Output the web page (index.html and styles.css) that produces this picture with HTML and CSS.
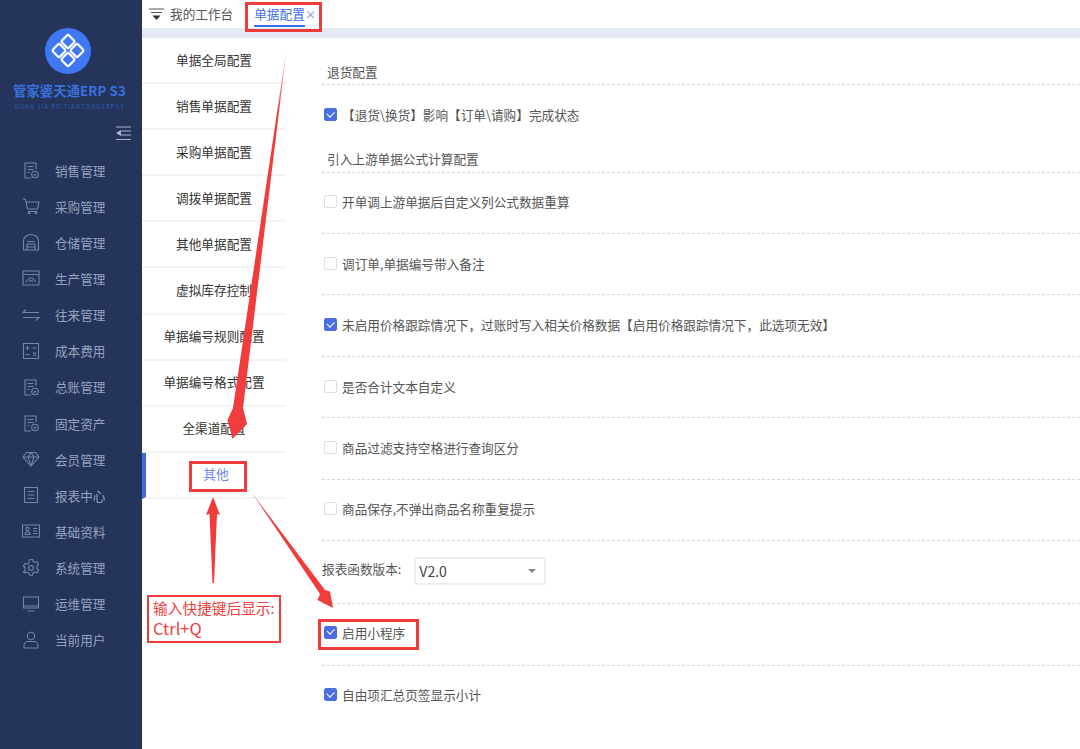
FILE: index.html
```html
<!DOCTYPE html>
<html lang="zh-CN">
<head>
<meta charset="utf-8">
<title>单据配置</title>
<link rel="stylesheet" href="styles.css">
</head>
<body>
<div class="app">
  <aside class="sidebar">
    <div class="brand">
      <div class="logo">
        <svg viewBox="0 0 46 46" width="46" height="46"><g fill="none" stroke="#fff" stroke-width="2.2" stroke-linejoin="round"><rect x="18" y="8.5" width="10" height="10" rx="1.5" transform="rotate(45 23 13.5)"/><rect x="9" y="17.5" width="10" height="10" rx="1.5" transform="rotate(45 14 22.5)"/><rect x="27" y="17.5" width="10" height="10" rx="1.5" transform="rotate(45 32 22.5)"/><rect x="18" y="26.5" width="10" height="10" rx="1.5" transform="rotate(45 23 31.5)"/></g></svg>
      </div>
      <div class="brand-name">管家婆天通ERP S3</div>
      <div class="brand-sub">GUAN JIA PO TIANTONGERPS3</div>
    </div>
    <div class="collapse">
      <svg viewBox="0 0 16 15" width="16" height="15"><g stroke="#aab4cc" stroke-width="1.2"><path d="M1 1h15M6 5h10M6 9h10M1 13.500h15"/></g><path d="M1 7l5-3v6z" fill="#aab4cc"/></svg>
    </div>
    <nav class="nav">
      <a class="nav-item"><svg class="ic" viewBox="0 0 18 18"><path d="M14 8V2H3v15h6M5.500 5.500h6M5.500 8.500h6M5.500 11.500h2"/><circle cx="13" cy="13.500" r="3.300"/><path d="M11.700 13.500l1 1 1.600-1.700"/></svg><span>销售管理</span></a>
      <a class="nav-item"><svg class="ic" viewBox="0 0 18 18"><path d="M1 1.500l2.500 1 2 9.500h10L17 5H4M6 14.500h9"/><circle cx="7" cy="16" r=".8"/><circle cx="14" cy="16" r=".8"/></svg><span>采购管理</span></a>
      <a class="nav-item"><svg class="ic" viewBox="0 0 18 18"><path d="M1.500 8C1.500 4 5 1.500 9 1.500S16.500 4 16.500 8v9h-15zM5 8.500h8M5 11h8v6M5 17v-6M5 14h8"/></svg><span>仓储管理</span></a>
      <a class="nav-item"><svg class="ic" viewBox="0 0 18 18"><path d="M1 2h16v14H1zM1 5.500h16M4 13l3.500-4h3l3.500 4M7.500 13a1.500 1.500 0 0 1 3 0"/></svg><span>生产管理</span></a>
      <a class="nav-item"><svg class="ic" viewBox="0 0 18 18"><path d="M4 3.500L1 6.500h16M14 14.500l3-3H1"/></svg><span>往来管理</span></a>
      <a class="nav-item"><svg class="ic" viewBox="0 0 18 18"><path d="M1.500 1.500h15v15h-15zM3.500 6h4M5.500 4v4M10.500 6h4M3.500 12.500h4M11 10.500l3 3.500M14 10.500L11 14"/></svg><span>成本费用</span></a>
      <a class="nav-item"><svg class="ic" viewBox="0 0 18 18"><path d="M14 8V2H3v15h6M5.500 5.500h6M5.500 8.500h6M5.500 11.500h2"/><circle cx="13" cy="13.500" r="3.300"/><path d="M11.700 13.500l1 1 1.600-1.700"/></svg><span>总账管理</span></a>
      <a class="nav-item"><svg class="ic" viewBox="0 0 18 18"><path d="M14 8V2H3v15h6M5.500 5.500h6M5.500 8.500h6M5.500 11.500h2"/><circle cx="13" cy="13.500" r="3.300"/><path d="M11.700 13.500l1 1 1.600-1.700"/></svg><span>固定资产</span></a>
      <a class="nav-item"><svg class="ic" viewBox="0 0 18 18"><path d="M4.500 2.500h9L17 7l-8 9-8-9zM1 7h16M6 7l3 9 3-9M6 7l3-4.500L12 7"/></svg><span>会员管理</span></a>
      <a class="nav-item"><svg class="ic" viewBox="0 0 18 18"><path d="M2.500 1.500h13v15h-13zM5.500 5.500h7M5.500 9h7M5.500 12.500h7"/></svg><span>报表中心</span></a>
      <a class="nav-item"><svg class="ic" viewBox="0 0 18 18"><path d="M.5 3h17v12H.5zM11 6.500h4.500M11 9h4.500M11 11.500h4.500M3 12.500c0-2 1-2.800 2.500-2.800S8 10.500 8 12.500z"/><circle cx="5.500" cy="7" r="1.600"/></svg><span>基础资料</span></a>
      <a class="nav-item"><svg class="ic" viewBox="0 0 18 18"><path d="M7.500 1h3l.6 2.200 1.800.9 2.200-.7 1.500 2.600-1.600 1.600v2.800l1.600 1.600-1.500 2.600-2.200-.7-1.800.9-.6 2.200h-3l-.6-2.200-1.800-.9-2.200.7L1.400 13.800 3 12.200V9.400L1.400 7.800l1.500-2.600 2.200.7 1.800-.9z" transform="translate(0 -.8)"/><circle cx="9" cy="9" r="2.400"/></svg><span>系统管理</span></a>
      <a class="nav-item"><svg class="ic" viewBox="0 0 18 18"><path d="M1.500 2h15v11h-15zM1.500 11h15M5.500 16h7"/></svg><span>运维管理</span></a>
      <a class="nav-item"><svg class="ic" viewBox="0 0 18 18"><circle cx="9" cy="5" r="3.700"/><path d="M2 17v-2.500c0-2.500 2-4 4-4h6c2 0 4 1.500 4 4V17z"/></svg><span>当前用户</span></a>
    </nav>
  </aside>
  <main class="main">
    <header class="tabs">
      <svg class="tabs-menu" viewBox="0 0 15 13" width="15" height="13"><path d="M0 1h15M2 4.500h11" stroke="#555" stroke-width="1.200"/><path d="M3.500 7.500h8L7.500 12z" fill="#333"/></svg>
      <span class="tab">我的工作台</span>
      <span class="tab tab-active"><span class="tab-label">单据配置</span><span class="tab-close">×</span></span>
    </header>
    <div class="strip"></div>
    <div class="body">
      <ul class="menu">
        <li>单据全局配置</li>
        <li>销售单据配置</li>
        <li>采购单据配置</li>
        <li>调拨单据配置</li>
        <li>其他单据配置</li>
        <li>虚拟库存控制</li>
        <li>单据编号规则配置</li>
        <li>单据编号格式配置</li>
        <li>全渠道配置</li>
        <li class="menu-active">其他</li>
      </ul>
      <section class="panel">
        <h3 class="sec first">退货配置</h3>
        <label class="row plain"><i class="cb on"></i>【退货\换货】影响【订单\请购】完成状态</label>
        <h3 class="sec second">引入上游单据公式计算配置</h3>
        <label class="row"><i class="cb"></i>开单调上游单据后自定义列公式数据重算</label>
        <label class="row"><i class="cb"></i>调订单,单据编号带入备注</label>
        <label class="row"><i class="cb on"></i>未启用价格跟踪情况下，过账时写入相关价格数据【启用价格跟踪情况下，此选项无效】</label>
        <label class="row"><i class="cb"></i>是否合计文本自定义</label>
        <label class="row"><i class="cb"></i>商品过滤支持空格进行查询区分</label>
        <label class="row"><i class="cb"></i>商品保存,不弹出商品名称重复提示</label>
        <div class="row row-select"><span class="sel-label">报表函数版本:</span><span class="select"><span>V2.0</span><i class="caret"></i></span></div>
        <label class="row row-mini"><i class="cb on"></i>启用小程序</label>
        <label class="row plain last"><i class="cb on"></i>自由项汇总页签显示小计</label>
      </section>
    </div>
  </main>
</div>

<div class="mark mark-tab"></div>
<div class="mark mark-other"></div>
<div class="mark mark-mini"></div>
<div class="mark mark-hint">输入快捷键后显示:<br><span class="hint-key">Ctrl+Q</span></div>
<svg class="arrows" viewBox="0 0 1080 749" width="1080" height="749">
  <defs>
    <linearGradient id="fade" gradientUnits="userSpaceOnUse" x1="0" y1="42" x2="0" y2="110">
      <stop offset="0" stop-color="#f23c3c" stop-opacity="0"/>
      <stop offset="1" stop-color="#f23c3c"/>
    </linearGradient>
  </defs>
  <polygon class="arrow-fade" points="287.500,42 243,408 247,424 232.500,439 227.500,420 233,408"/>
  <polygon points="213,497 220,515 217,514 214,583 212.500,583 209.500,514 206,515"/>
  <polygon points="252,493 325,590 330,591.500 333,608 317.500,600 320,594"/>
</svg>
</body>
</html>
```
FILE: styles.css
```css
* { box-sizing: border-box; }
html, body { margin: 0; padding: 0; width: 1080px; height: 749px; overflow: hidden; background: #fff; }
body { font-family: "Noto Sans CJK SC", "Noto Sans", sans-serif; font-size: 12.650px; color: #444; position: relative; }
.app { display: flex; width: 1080px; height: 749px; }

.sidebar { width: 142px; flex: none; background: #24345a; color: #96a3bf; display: flex; flex-direction: column; }
.brand { display: flex; flex-direction: column; align-items: center; padding: 28px 3px 0 0; }
.logo { width: 46px; height: 46px; border-radius: 50%; background: #3f78f2; margin-right: 3px; }
.brand-name { margin-top: 6px; font-size: 13.300px; font-weight: 700; line-height: 22px; color: #3a70dc; white-space: nowrap; letter-spacing: .1px; }
.brand-sub { font-size: 6px; line-height: 9px; color: #2f5cb4; letter-spacing: 1px; white-space: nowrap; }
.collapse { display: flex; justify-content: flex-end; padding: 15px 11px 0 0; height: 41px; }
.nav { display: flex; flex-direction: column; }
.nav-item { display: flex; align-items: center; height: 36.150px; padding-left: 22px; gap: 15px; font-size: 12.600px; white-space: nowrap; }
.ic { width: 18px; height: 18px; flex: none; fill: none; stroke: #7585a8; stroke-width: 1.100; }

.main { flex: 1; min-width: 0; display: flex; flex-direction: column; }
.tabs { height: 28px; display: flex; align-items: center; padding-left: 7px; color: #555; background: #fff; }
.tabs-menu { flex: none; }
.tab { line-height: 28px; margin-left: 6px; position: relative; white-space: nowrap; }
.tab-active { margin-left: 21px; color: #3f6fe8; display: flex; align-items: center; }
.tab-label { display: block; height: 28px; position: relative; }
.tab-label::after { content: ""; position: absolute; left: 0; right: 0; bottom: 1px; height: 2.500px; background: #3f6fe8; }
.tab-close { font-size: 11.500px; font-weight: 700; color: #9aaddc; }
.strip { height: 10px; background: #e5eaf2; }

.body { flex: 1; display: flex; min-height: 0; }
.menu { list-style: none; margin: 0; padding: 0; width: 144px; flex: none; color: #333; }
.menu li { height: 46.100px; display: flex; align-items: center; justify-content: center; padding-bottom: 2px; border-bottom: 2px solid #f3f3f3; white-space: nowrap; }
.menu .menu-active { color: #6a88ee; border-left: 4px solid #4468e0; }

.panel { flex: 1; min-width: 0; padding-left: 36px; }
.sec { margin: 0; font-weight: 400; font-size: 12.650px; color: #555; height: 26px; line-height: 26px; padding-left: 5px; border-bottom: 1px dashed #d9d9d9; }
.sec.first { margin-top: 21px; }
.sec.second { height: 26.700px; }
.row { display: flex; align-items: center; height: 61.400px; padding: 0 0 2px 2px; border-bottom: 1px dashed #d9d9d9; color: #555; white-space: nowrap; }
.row.plain { height: 61px; border-bottom: 0; }
.row.last { padding-bottom: 4px; }
.row-select { height: 63px; padding-left: 0; }
.row-mini { height: 62px; padding-bottom: 5px; }
.cb { width: 13px; height: 13px; flex: none; border: 1.500px solid #dedede; border-radius: 2px; background: #fff; margin-right: 5px; position: relative; }
.cb.on { background: #4a6ee0; border-color: #4a6ee0; }
.cb.on::after { content: ""; position: absolute; left: 2px; top: 1.500px; width: 6px; height: 3.500px; border-left: 1.600px solid #fff; border-bottom: 1.600px solid #fff; transform: rotate(-45deg); }
.sel-label { margin-right: 13px; position: relative; top: -3px; }
.select { width: 132px; height: 28px; border: 2px solid #eee; border-radius: 2px; display: flex; align-items: center; justify-content: space-between; padding: 0 8px 0 3px; font-size: 14px; color: #444; }
.caret { width: 0; height: 0; border-left: 4.500px solid transparent; border-right: 4.500px solid transparent; border-top: 4.500px solid #888; }

.mark { position: absolute; border: 3px solid #ef3a3a; }
.mark-tab { left: 245px; top: 2px; width: 77px; height: 30px; }
.mark-other { left: 189px; top: 461px; width: 58px; height: 31px; }
.mark-mini { left: 318px; top: 619px; width: 101px; height: 31px; }
.mark-hint { left: 147px; top: 595px; width: 134px; height: 48px; border-width: 2px; color: #f04040; font-size: 14.700px; line-height: 20px; padding: 1px 0 0 4px; white-space: nowrap; }
.hint-key { font-size: 16.500px; }
.arrows { position: absolute; left: 0; top: 0; pointer-events: none; }
.arrows polygon { fill: #f23c3c; }
.arrows .arrow-fade { fill: url(#fade); }
```
